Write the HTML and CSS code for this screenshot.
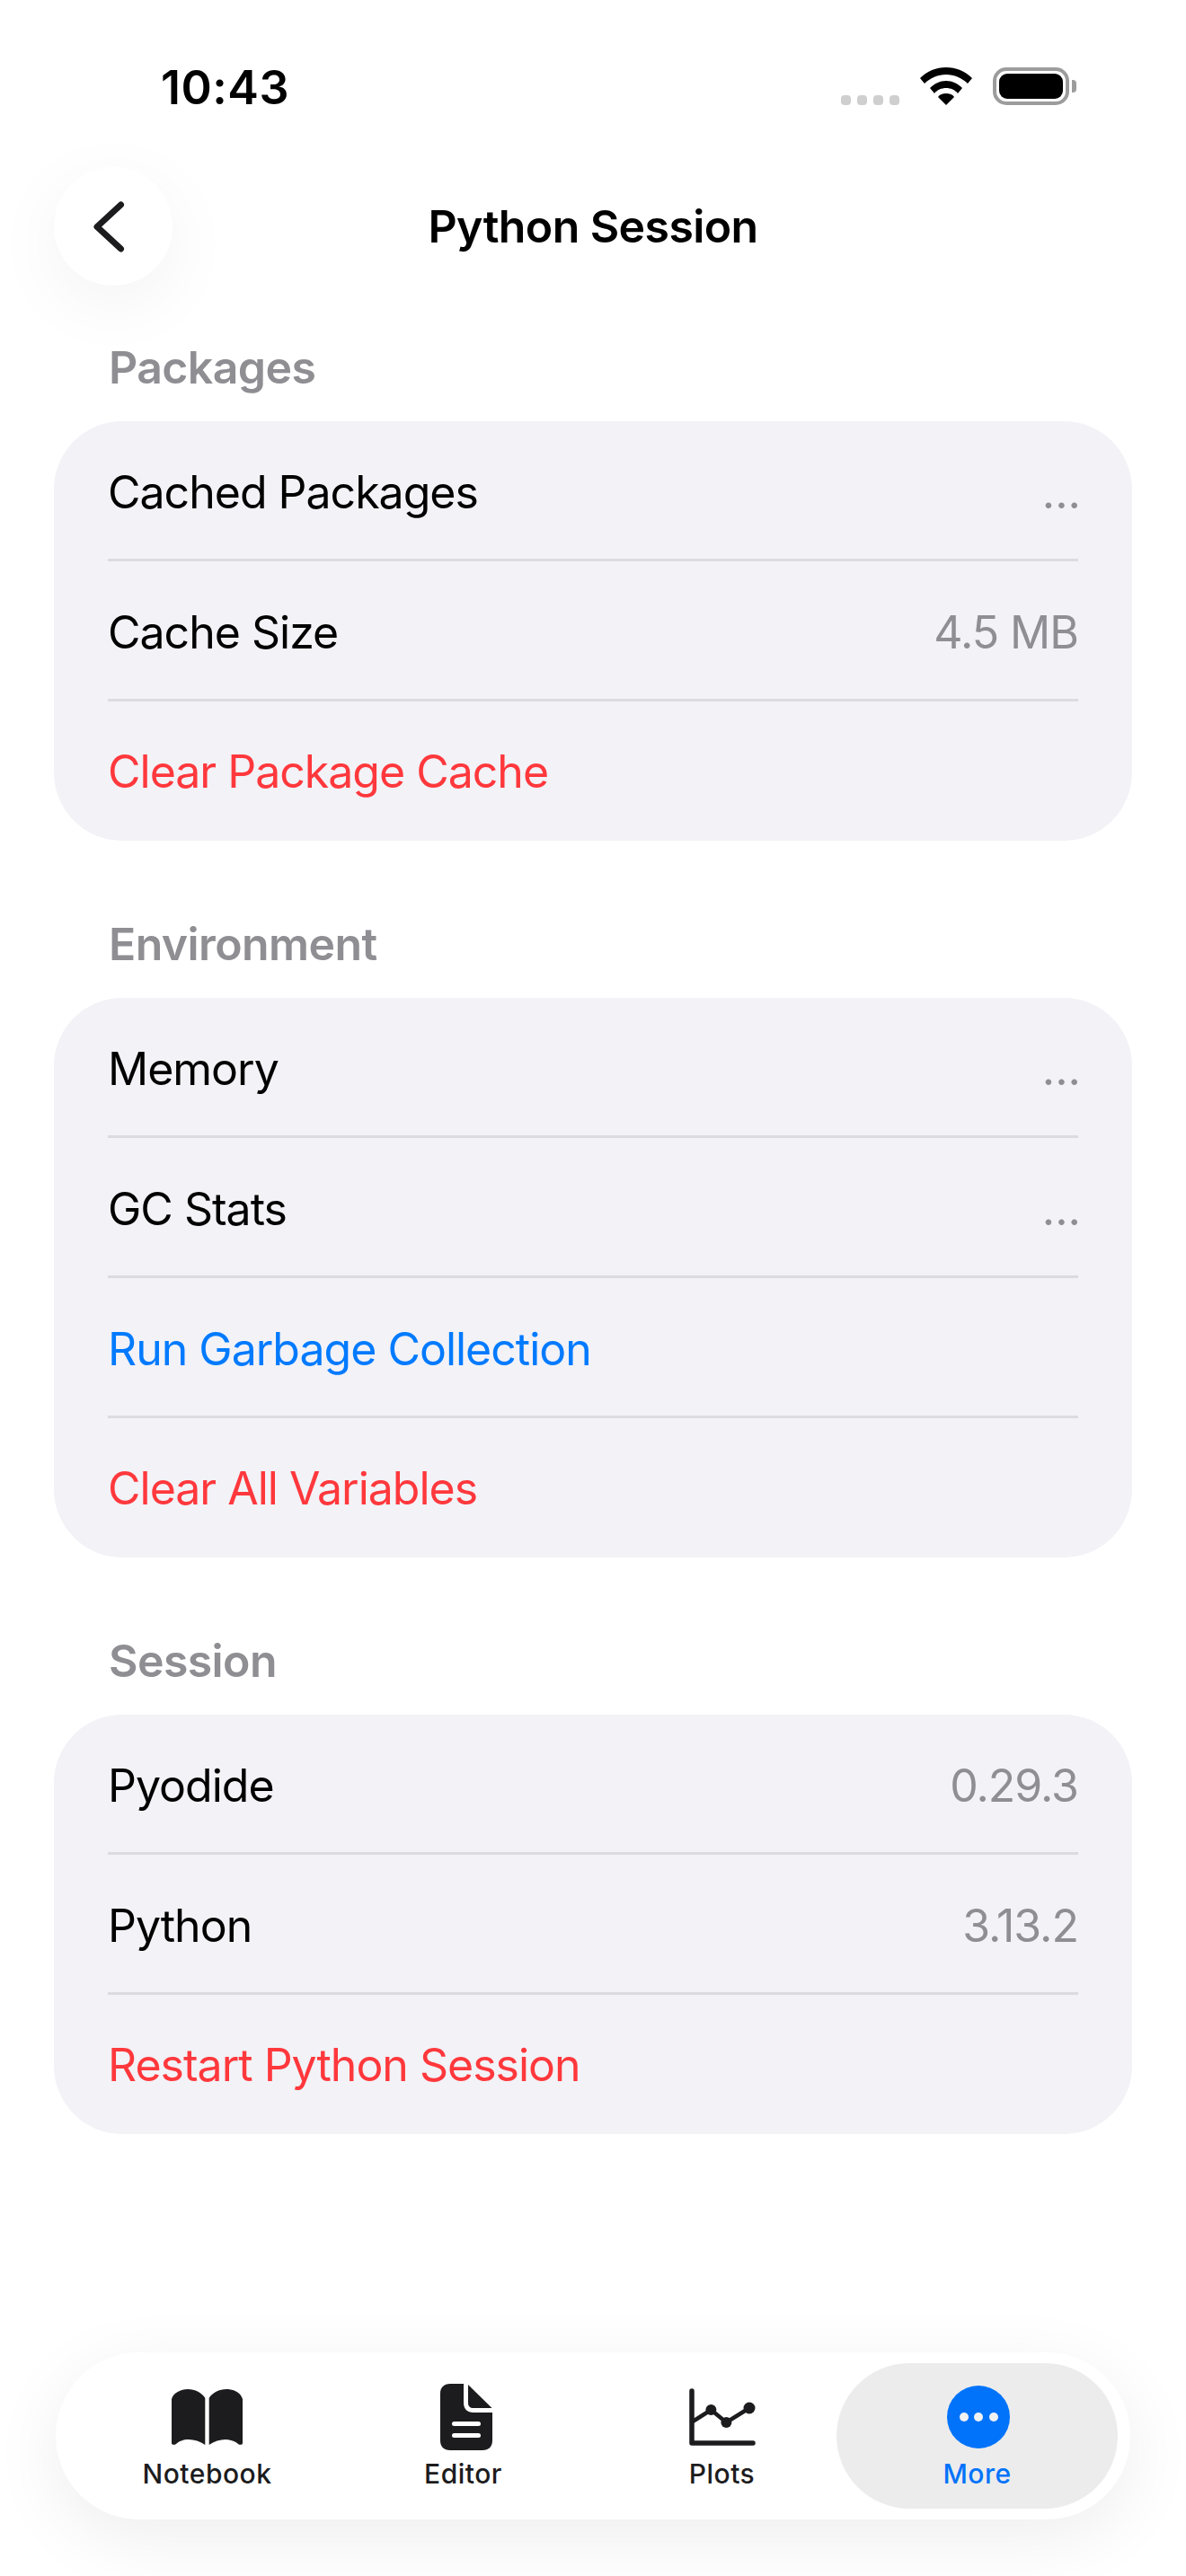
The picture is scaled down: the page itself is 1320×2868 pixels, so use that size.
FILE: index.html
```html
<!DOCTYPE html>
<html lang="en">
<head>
    <meta charset="UTF-8">
    <title>Python Session</title>
    <link rel="stylesheet" href="styles.css">
</head>
<body>

<div class="screen">

    <!-- Status bar -->
    <div class="status-bar">
        <span class="clock">10:43</span>
        <div class="status-icons">
            <div class="signal"><i></i><i></i><i></i><i></i></div>
            <svg class="wifi" width="58" height="42" viewBox="0 0 58 42">
                <path d="M29 0C18 0 8 4 0 12l5 6c6-6 15-10 24-10s18 4 24 10l5-6C50 4 40 0 29 0z" />
                <path d="M29 15c-7 0-13 3-18 8l5 6c3-4 8-6 13-6s10 2 13 6l5-6c-5-5-11-8-18-8z" />
                <path d="M29 29c-4 0-7 1-9 4l9 9 9-9c-2-3-5-4-9-4z" />
            </svg>
            <div class="battery"><div class="battery-fill"></div></div>
            <div class="battery-cap"></div>
        </div>
    </div>

    <!-- Nav -->
    <div class="nav">
        <button class="back">
            <svg width="35" height="57" viewBox="0 0 35 57"><path d="M30.5 4 4 28.5 30.5 53" fill="none" stroke="#1c1c1e" stroke-width="7" stroke-linecap="round" stroke-linejoin="round"/></svg>
        </button>
        <h1>Python Session</h1>
    </div>

    <!-- Packages -->
    <h2 class="section-title">Packages</h2>
    <div class="card">
        <div class="row"><span>Cached Packages</span><span class="dots">...</span></div>
        <div class="row"><span>Cache Size</span><span class="value">4.5 MB</span></div>
        <div class="row danger"><span>Clear Package Cache</span></div>
    </div>

    <!-- Environment -->
    <h2 class="section-title">Environment</h2>
    <div class="card">
        <div class="row"><span>Memory</span><span class="dots">...</span></div>
        <div class="row"><span>GC Stats</span><span class="dots">...</span></div>
        <div class="row action"><span>Run Garbage Collection</span></div>
        <div class="row danger"><span>Clear All Variables</span></div>
    </div>

    <!-- Session -->
    <h2 class="section-title">Session</h2>
    <div class="card">
        <div class="row"><span>Pyodide</span><span class="value">0.29.3</span></div>
        <div class="row"><span>Python</span><span class="value">3.13.2</span></div>
        <div class="row danger"><span>Restart Python Session</span></div>
    </div>

    <!-- Tab bar -->
    <div class="tab-bar">
        <div class="tab">
            <div class="tab-icon">
                <svg width="79" height="62" viewBox="0 0 79 62" fill="#1c1c1e"><path d="M0 11C2 4 10 0 18 0c8 0 16 4 19.3 10v52C32 58 25 56 19 56c-6 0-11 2-14 5-2 1.500-5 1-5-1z"/><path d="M79 11C77 4 69 0 61 0c-8 0-16 4-19.3 10v52C47 58 54 56 60 56c6 0 11 2 14 5 2 1.500 5 1 5-1z"/></svg>
            </div>
            <span>Notebook</span>
        </div>
        <div class="tab">
            <div class="tab-icon icon-editor">
                <svg width="58" height="74" viewBox="0 0 58 74"><path d="M11 0h15v21c0 7 4 11 11 11h21v31c0 7-4 11-11 11H11C4 74 0 70 0 63V11C0 4 4 0 11 0z" fill="#1c1c1e"/><path d="M31 1l26.5 26H37c-4 0-6-2-6-6z" fill="#1c1c1e"/><rect x="13" y="42" width="32" height="5" rx="2.5" fill="#fff"/><rect x="13" y="55" width="32" height="5" rx="2.5" fill="#fff"/></svg>
            </div>
            <span>Editor</span>
        </div>
        <div class="tab tab-plots">
            <div class="tab-icon">
                <svg width="74" height="64" viewBox="0 0 74 64"><path d="M3 3v58h68" fill="none" stroke="#1c1c1e" stroke-width="5.5" stroke-linecap="round" stroke-linejoin="round"/><path d="M4 37l20.4-13 17 14L67 22" fill="none" stroke="#1c1c1e" stroke-width="4.5"/><circle cx="24.4" cy="24" r="6" fill="#1c1c1e"/><circle cx="41.4" cy="38" r="6" fill="#1c1c1e"/><circle cx="67" cy="22" r="6.5" fill="#1c1c1e"/></svg>
            </div>
            <span>Plots</span>
        </div>
        <div class="tab active">
            <div class="tab-icon icon-more">
                <div class="more-icon"><i></i><i></i><i></i></div>
            </div>
            <span>More</span>
        </div>
    </div>

</div>

</body>
</html>
```

FILE: styles.css
```css
* {
    margin: 0;
    padding: 0;
    box-sizing: border-box;
}

body {
    font-family: 'Inter', sans-serif;
    background: #ffffff;
    color: #000;
}

.screen {
    width: 1320px;
    height: 2868px;
    display: flex;
    flex-direction: column;
    overflow: hidden;
}

/* Status bar */
.status-bar {
    height: 186px;
    padding: 70px 122px 0 179px;
    display: flex;
    justify-content: space-between;
    align-items: flex-start;
}

.clock {
    font-size: 52px;
    font-weight: 600;
    line-height: 56px;
    letter-spacing: 0.5px;
}

.status-icons {
    display: flex;
    align-items: flex-start;
    margin-top: 5px;
}

.signal {
    display: flex;
    gap: 7px;
    margin-top: 31px;
    margin-right: 23px;
}

.signal i {
    width: 11px;
    height: 11px;
    border-radius: 4px;
    background: #cfcfcf;
}

.wifi {
    fill: #000;
    margin-right: 23px;
}

.battery {
    width: 85px;
    height: 42px;
    border: 4px solid #9c9c9c;
    border-radius: 15px;
    padding: 3px;
}

.battery-fill {
    height: 100%;
    background: #000;
    border-radius: 9px;
}

.battery-cap {
    width: 5px;
    height: 14px;
    margin-top: 14px;
    margin-left: 3px;
    background: #9c9c9c;
    border-radius: 0 4px 4px 0;
}

/* Nav */
.nav {
    height: 132px;
    position: relative;
    display: flex;
    align-items: center;
    justify-content: center;
}

.nav h1 {
    font-size: 50px;
    font-weight: 600;
    letter-spacing: -0.6px;
}

.back {
    position: absolute;
    left: 60px;
    top: 0;
    width: 132px;
    height: 132px;
    border: none;
    border-radius: 50%;
    background: #fff;
    box-shadow: 0 20px 80px rgba(0, 0, 0, 0.05);
    display: flex;
    align-items: center;
    justify-content: center;
    padding-right: 10px;
}

/* Sections */
.section-title {
    font-size: 50px;
    font-weight: 600;
    letter-spacing: -0.6px;
    color: #8e8e93;
    padding-left: 121px;
    line-height: 60px;
    margin-bottom: 30px;
}

.nav + .section-title {
    margin-top: 61px;
}

.card {
    margin: 0 60px 85px;
    padding: 0 60px;
    background: #f2f2f7;
    border-radius: 76px;
}

.row {
    height: 156px;
    display: flex;
    align-items: center;
    justify-content: space-between;
    padding-top: 4px;
    font-size: 50px;
    letter-spacing: -1px;
    border-bottom: 3px solid #dcdce0;
}

.row:last-child {
    height: 155px;
    border-bottom-color: transparent;
}

.value {
    color: #8e8e93;
}

.dots {
    color: #8e8e93;
    letter-spacing: 0;
    margin-right: -3px;
}

.danger {
    color: #ff383c;
}

.action {
    color: #007aff;
}

/* Tab bar */
.tab-bar {
    margin: auto 62px 63px;
    height: 186px;
    border-radius: 93px;
    background: #fff;
    box-shadow: 0 20px 80px rgba(0, 0, 0, 0.07);
    display: flex;
    padding: 12px 12px 12px 26px;
}

.tab {
    width: 285px;
    display: flex;
    flex-direction: column;
    align-items: center;
    padding-top: 23px;
    gap: 8px;
    font-size: 30px;
    line-height: 36px;
    font-weight: 500;
    letter-spacing: 0.5px;
    color: #1c1c1e;
}

.tab-plots {
    margin-left: 3px;
}

.tab-icon {
    height: 74px;
    display: flex;
    align-items: center;
}

.icon-editor {
    margin-left: 6px;
}

.icon-more {
    margin-left: 3px;
}

.tab.active {
    width: 313px;
    margin-left: -15px;
    border-radius: 81px;
    background: #ececec;
    color: #0073fa;
}

.more-icon {
    width: 70px;
    height: 70px;
    border-radius: 50%;
    background: #0073fa;
    display: flex;
    align-items: center;
    justify-content: center;
    gap: 6.5px;
}

.more-icon i {
    width: 10px;
    height: 10px;
    border-radius: 50%;
    background: #f2f2f2;
}
```
